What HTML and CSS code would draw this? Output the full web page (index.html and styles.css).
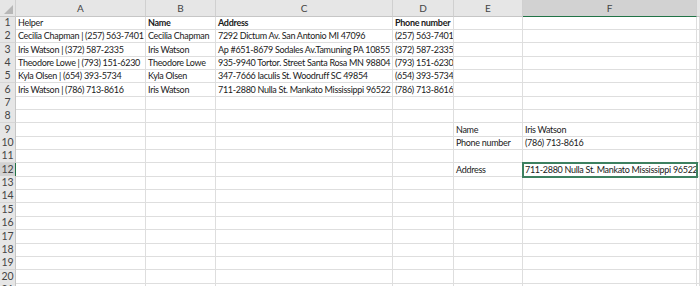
FILE: index.html
```html
<!DOCTYPE html>
<html lang="en">
<head>
  <meta charset="UTF-8" />
  <title>Helper sheet</title>
  <link rel="stylesheet" href="styles.css">
</head>
<body>

<div class="sheet">
  <div class="row head">
    <div class="corner"><span class="tri"></span></div>
    <div class="col">A</div>
    <div class="col">B</div>
    <div class="col">C</div>
    <div class="col">D</div>
    <div class="col">E</div>
    <div class="col active">F</div>
    <div class="col rest"></div>
  </div>

  <div class="row">
    <div class="num">1</div>
    <div class="cell">Helper</div>
    <div class="cell b">Name</div>
    <div class="cell b">Address</div>
    <div class="cell b">Phone number</div>
    <div class="cell"></div><div class="cell"></div><div class="cell"></div>
  </div>
  <div class="row">
    <div class="num">2</div>
    <div class="cell">Cecilia Chapman | (257) 563-7401</div>
    <div class="cell">Cecilia Chapman</div>
    <div class="cell">7292 Dictum Av. San Antonio MI 47096</div>
    <div class="cell">(257) 563-7401</div>
    <div class="cell"></div><div class="cell"></div><div class="cell"></div>
  </div>
  <div class="row">
    <div class="num">3</div>
    <div class="cell">Iris Watson | (372) 587-2335</div>
    <div class="cell">Iris Watson</div>
    <div class="cell">Ap #651-8679 Sodales Av.Tamuning PA 10855</div>
    <div class="cell">(372) 587-2335</div>
    <div class="cell"></div><div class="cell"></div><div class="cell"></div>
  </div>
  <div class="row">
    <div class="num">4</div>
    <div class="cell">Theodore Lowe | (793) 151-6230</div>
    <div class="cell">Theodore Lowe</div>
    <div class="cell">935-9940 Tortor. Street Santa Rosa MN 98804</div>
    <div class="cell">(793) 151-6230</div>
    <div class="cell"></div><div class="cell"></div><div class="cell"></div>
  </div>
  <div class="row">
    <div class="num">5</div>
    <div class="cell">Kyla Olsen | (654) 393-5734</div>
    <div class="cell">Kyla Olsen</div>
    <div class="cell">347-7666 Iaculis St. Woodruff SC 49854</div>
    <div class="cell">(654) 393-5734</div>
    <div class="cell"></div><div class="cell"></div><div class="cell"></div>
  </div>
  <div class="row">
    <div class="num">6</div>
    <div class="cell">Iris Watson | (786) 713-8616</div>
    <div class="cell">Iris Watson</div>
    <div class="cell">711-2880 Nulla St. Mankato Mississippi 96522</div>
    <div class="cell">(786) 713-8616</div>
    <div class="cell"></div><div class="cell"></div><div class="cell"></div>
  </div>
  <div class="row">
    <div class="num">7</div>
    <div class="cell"></div><div class="cell"></div><div class="cell"></div><div class="cell"></div><div class="cell"></div><div class="cell"></div><div class="cell"></div>
  </div>
  <div class="row">
    <div class="num">8</div>
    <div class="cell"></div><div class="cell"></div><div class="cell"></div><div class="cell"></div><div class="cell"></div><div class="cell"></div><div class="cell"></div>
  </div>
  <div class="row">
    <div class="num">9</div>
    <div class="cell"></div><div class="cell"></div><div class="cell"></div><div class="cell"></div>
    <div class="cell">Name</div>
    <div class="cell">Iris Watson</div>
    <div class="cell"></div>
  </div>
  <div class="row">
    <div class="num">10</div>
    <div class="cell"></div><div class="cell"></div><div class="cell"></div><div class="cell"></div>
    <div class="cell">Phone number</div>
    <div class="cell">(786) 713-8616</div>
    <div class="cell"></div>
  </div>
  <div class="row">
    <div class="num">11</div>
    <div class="cell"></div><div class="cell"></div><div class="cell"></div><div class="cell"></div><div class="cell"></div><div class="cell"></div><div class="cell"></div>
  </div>
  <div class="row">
    <div class="num active">12</div>
    <div class="cell"></div><div class="cell"></div><div class="cell"></div><div class="cell"></div>
    <div class="cell">Address</div>
    <div class="cell selected">711-2880 Nulla St. Mankato Mississippi 96522</div>
    <div class="cell"></div>
  </div>
  <div class="row">
    <div class="num">13</div>
    <div class="cell"></div><div class="cell"></div><div class="cell"></div><div class="cell"></div><div class="cell"></div><div class="cell"></div><div class="cell"></div>
  </div>
  <div class="row">
    <div class="num">14</div>
    <div class="cell"></div><div class="cell"></div><div class="cell"></div><div class="cell"></div><div class="cell"></div><div class="cell"></div><div class="cell"></div>
  </div>
  <div class="row">
    <div class="num">15</div>
    <div class="cell"></div><div class="cell"></div><div class="cell"></div><div class="cell"></div><div class="cell"></div><div class="cell"></div><div class="cell"></div>
  </div>
  <div class="row">
    <div class="num">16</div>
    <div class="cell"></div><div class="cell"></div><div class="cell"></div><div class="cell"></div><div class="cell"></div><div class="cell"></div><div class="cell"></div>
  </div>
  <div class="row">
    <div class="num">17</div>
    <div class="cell"></div><div class="cell"></div><div class="cell"></div><div class="cell"></div><div class="cell"></div><div class="cell"></div><div class="cell"></div>
  </div>
  <div class="row">
    <div class="num">18</div>
    <div class="cell"></div><div class="cell"></div><div class="cell"></div><div class="cell"></div><div class="cell"></div><div class="cell"></div><div class="cell"></div>
  </div>
  <div class="row">
    <div class="num">19</div>
    <div class="cell"></div><div class="cell"></div><div class="cell"></div><div class="cell"></div><div class="cell"></div><div class="cell"></div><div class="cell"></div>
  </div>
  <div class="row">
    <div class="num">20</div>
    <div class="cell"></div><div class="cell"></div><div class="cell"></div><div class="cell"></div><div class="cell"></div><div class="cell"></div><div class="cell"></div>
  </div>
  <div class="row">
    <div class="num">21</div>
    <div class="cell"></div><div class="cell"></div><div class="cell"></div><div class="cell"></div><div class="cell"></div><div class="cell"></div><div class="cell"></div>
  </div>
</div>

</body>
</html>
```

FILE: styles.css
```css
* {
  box-sizing: border-box;
}

body {
  margin: 0;
  background: #fff;
  overflow: hidden;
  font-family: Lato, 'Liberation Sans', sans-serif;
  color: #1a1a1a;
}

.sheet {
  width: 700px;
  height: 286px;
  overflow: hidden;
}

.row {
  display: grid;
  grid-template-columns: 16px 130px 70px 177px 61px 69px 174px 1fr;
  height: 13.35px;
}

.row.head {
  height: 16px;
}

.corner,
.col {
  background: #e6e6e6;
  border-right: 1px solid #d0d0d0;
  border-bottom: 1px solid #c6c6c6;
  position: relative;
}

.col {
  font-size: 10px;
  line-height: 16px;
  text-align: center;
  color: #444;
}

.col.active {
  background: #d2d2d2;
  border-bottom: 1px solid #217346;
}

.col.rest {
  border-right: none;
}

.tri {
  position: absolute;
  right: 2px;
  bottom: 2px;
  width: 0;
  height: 0;
  border-left: 9px solid transparent;
  border-bottom: 9px solid #b7b7b7;
}

.num {
  background: #e6e6e6;
  border-right: 1px solid #c6c6c6;
  border-bottom: 1px solid #d6d6d6;
  font-size: 10.5px;
  line-height: 13px;
  text-align: center;
  color: #444;
}

.num.active {
  background: #d2d2d2;
  border-right: 1px solid #217346;
}

.cell {
  border-right: 1px solid #dedede;
  border-bottom: 1px solid #dedede;
  font-size: 9px;
  letter-spacing: -0.3px;
  line-height: 13px;
  padding-left: 2px;
  white-space: nowrap;
  overflow: hidden;
}

.cell.b {
  font-weight: bold;
}

.cell.selected {
  outline: 2px solid #3d8060;
  outline-offset: -1px;
  position: relative;
}
```
